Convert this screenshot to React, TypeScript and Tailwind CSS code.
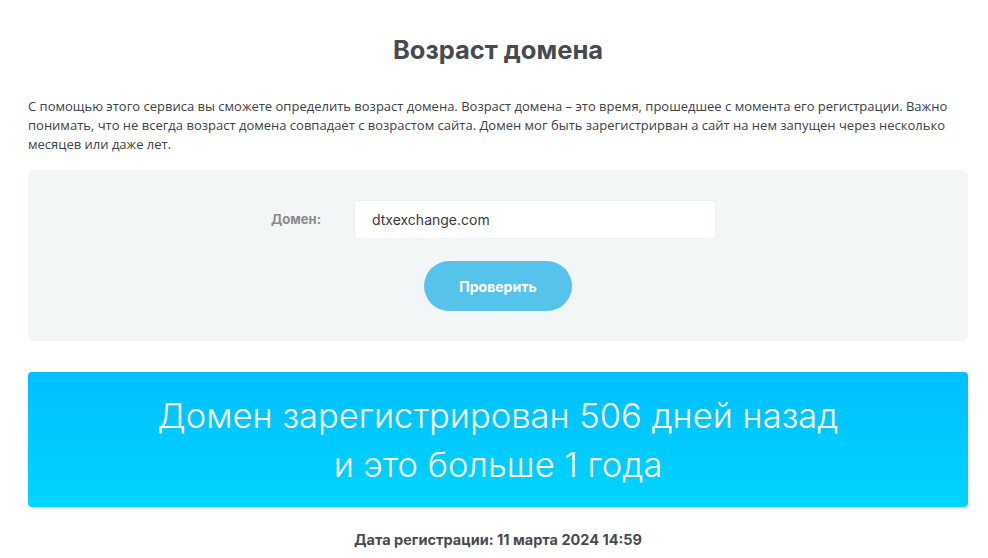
export default function App() {
  return (
    <div className="min-h-screen bg-white font-['Inter',sans-serif] text-[#3c4049]">
      <div className="ml-[28px] w-[940px] pt-[34px]">
        <h1 className="text-center text-[25.5px] font-bold leading-[32px] text-[#474b51]">Возраст домена</h1>

        <p className="mt-[31px] font-['Open_Sans',sans-serif] text-[13px] leading-[19px] text-[#3c4049]">
          С помощью этого сервиса вы сможете определить возраст домена. Возраст домена – это время, прошедшее с момента его регистрации. Важно понимать, что не всегда возраст домена совпадает с возрастом сайта. Домен мог быть зарегистрирван а сайт на нем запущен через несколько месяцев или даже лет.
        </p>

        <div className="mt-[16px] flex h-[171px] flex-col items-center rounded-[6px] bg-[#f3f6f7] pt-[30px]">
          <div className="mr-[9px] flex items-center">
            <label className="w-[83px] text-[13px] font-bold text-[#8b8b8b]">Домен:</label>
            <input
              readOnly
              value="dtxexchange.com"
              className="h-[39px] w-[362px] rounded-[2px] border border-[#eef1f2] bg-white px-[17px] text-[14px] text-[#3a3a3a] outline-none"
            />
          </div>
          <button className="mt-[22px] h-[50px] w-[148px] rounded-full bg-[#56c4ea] text-[14px] font-bold text-white">
            Проверить
          </button>
        </div>

        <div className="mt-[31px] flex h-[135px] flex-col items-center justify-center rounded-[4px] bg-gradient-to-b from-[#00bfff] to-[#00d4fd] text-center text-[34.5px] font-light leading-[49px] text-white">
          <div>Домен зарегистрирован 506 дней назад</div>
          <div>и это больше 1 года</div>
        </div>

        <div className="mt-[22px] text-center text-[14.5px] font-bold text-[#474b51]">
          Дата регистрации: 11 марта 2024 14:59
        </div>
      </div>
    </div>
  );
}
